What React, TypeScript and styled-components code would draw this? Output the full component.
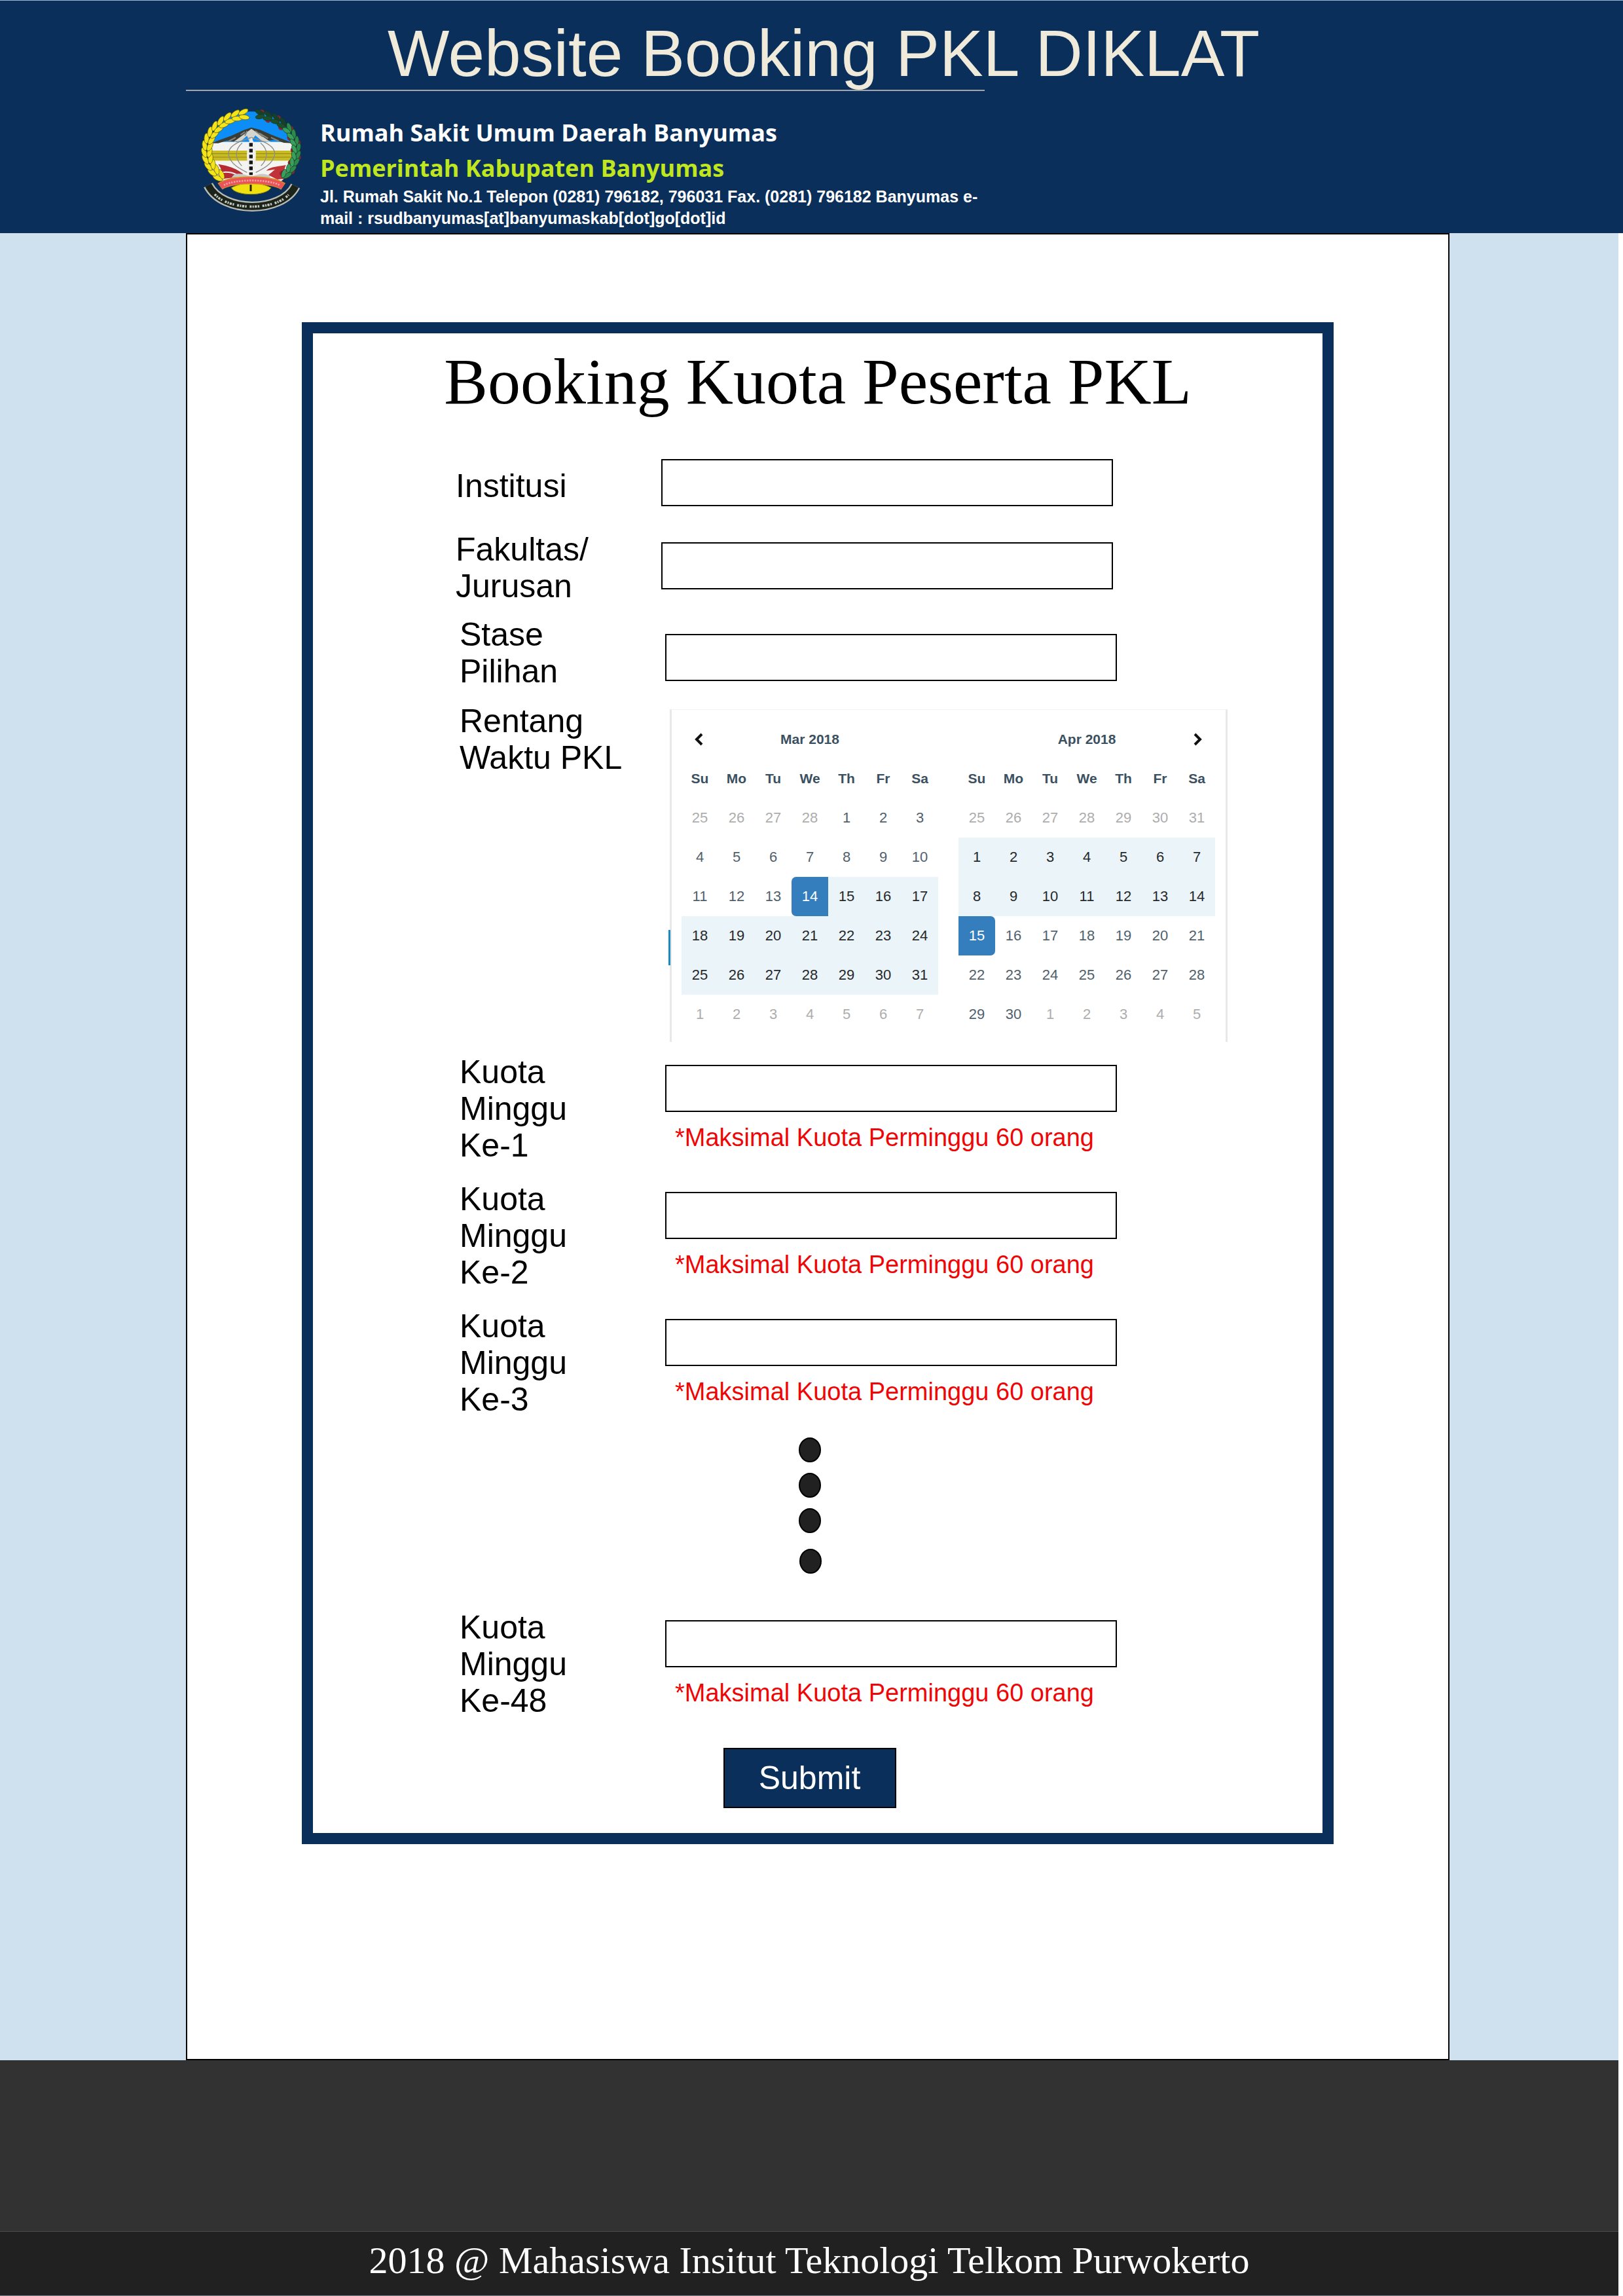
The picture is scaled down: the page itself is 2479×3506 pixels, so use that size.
import React from "react";
import styled, { createGlobalStyle, css } from "styled-components";

const sans = `"Liberation Sans", Arial, Helvetica, sans-serif`;
const serif = `"Liberation Serif", "Times New Roman", serif`;
const humanist = `"Open Sans", "Noto Sans", sans-serif`;

const color = {
  navy: "#0a2f5a",
  sky: "#cfe0ee",
  cream: "#f0eadb",
  lime: "#bfe61e",
  red: "#f00505",
  pick: "#357ebd",
  range: "#ebf4f8",
};

const GlobalStyle = createGlobalStyle`
  *, *::before, *::after { box-sizing: border-box; }
  body { margin: 0; background: #fff; font-family: ${sans}; color: #000; }
`;

/* ---------- header ---------- */

const Header = styled.header`
  display: grid;
  grid-template-columns: 284fr 1930fr 265fr;
  padding: 24px 0 6px;
  border-top: 1px solid #9dbad3;
  background: ${color.navy};
`;

const HeaderInner = styled.div`
  grid-column: 2;
`;

const SiteTitle = styled.h1`
  margin: 0;
  padding-left: 18px;
  font-size: 100px;
  line-height: 112px;
  font-weight: 400;
  text-align: center;
  color: ${color.cream};
`;

const Rule = styled.hr`
  width: 1220px;
  max-width: 100%;
  height: 2px;
  margin: 0;
  border: 0;
  background: #a3a5a8;
`;

const Brand = styled.div`
  display: flex;
  align-items: flex-start;
  gap: 24px;
  padding-left: 21px;
`;

const Emblem = styled.svg`
  flex: none;
  width: 160px;
  height: 160px;
  margin-top: 26px;
`;

const BrandText = styled.div`
  padding-top: 37px;
  font-weight: 700;
  color: #fff;
`;

const BrandName = styled.p<{ $accent?: boolean }>`
  margin: 0;
  font-family: ${humanist};
  font-size: 36px;
  line-height: 54px;
  color: ${(p) => (p.$accent ? color.lime : "#fff")};
`;

const Address = styled.address`
  font-size: 25px;
  line-height: 33px;
  font-style: normal;
`;

/* ---------- body ---------- */

const Page = styled.div`
  padding-right: 7px;
`;

const Body = styled.div`
  display: grid;
  grid-template-columns: 284fr 1930fr 258fr;
  background: ${color.sky};
`;

const Sheet = styled.main`
  grid-column: 2;
  padding: 134px 175px 328px;
  border: 2px solid #000;
  background: #fff;
`;

const Card = styled.section`
  padding: 18px 0 38px;
  border: 17px solid ${color.navy};
`;

const CardTitle = styled.h2`
  margin: 0 0 62px;
  font-family: ${serif};
  font-size: 100px;
  line-height: 112px;
  font-weight: 400;
  text-align: center;
`;

const Form = styled.form`
  padding: 0 145px 0 218px;
`;

const Group = styled.div<{ $indent?: number; $gap: number }>`
  display: flex;
  flex-direction: column;
  gap: ${(p) => p.$gap}px;
  padding-left: ${(p) => p.$indent ?? 0}px;
`;

const Stack = styled.div`
  display: flex;
  flex-direction: column;
  gap: 18px;
`;

const Row = styled.div`
  display: grid;
  grid-template-columns: 314px minmax(0, 1fr);
  align-items: start;
`;

const Label = styled.label<{ $inset?: number }>`
  padding-top: ${(p) => p.$inset ?? 0}px;
  font-size: 50px;
  line-height: 56px;
  white-space: pre-line;
`;

const Control = styled.div<{ $inset?: number }>`
  padding-top: ${(p) => p.$inset ?? 0}px;
`;

const TextBox = styled.input`
  display: block;
  width: 690px;
  max-width: 100%;
  height: 72px;
  padding: 0 16px;
  border: 2px solid #000;
  border-radius: 0;
  background: #fff;
  font: 40px ${sans};
`;

const Hint = styled.p`
  margin: 17px 0 0;
  padding-left: 15px;
  font-size: 38px;
  line-height: 44px;
  color: ${color.red};
`;

const Centered = styled.div`
  display: flex;
  justify-content: center;
  padding-right: 98px;
`;

const Dots = styled.svg`
  width: 36px;
  height: 210px;
  margin: 29px 0 53px;
`;

const Submit = styled.button`
  width: 264px;
  height: 92px;
  margin-top: 44px;
  padding: 0;
  border: 2px solid #000;
  border-radius: 0;
  background: ${color.navy};
  color: #fff;
  font: 50px ${sans};
`;

/* ---------- calendar ---------- */

const Calendar = styled.div`
  position: relative;
  display: flex;
  justify-content: space-between;
  margin-left: 7px;
  padding: 15px 16px 12px 15px;
  border: 3px solid #e8e8ea;
  border-width: 1px 3px 0;
  border-top-color: #f3f3f3;

  &::before {
    content: "";
    position: absolute;
    left: -5px;
    top: 336px;
    width: 3px;
    height: 54px;
    background: #1b8bbf;
  }
`;

const MonthBox = styled.div`
  width: 392px;
`;

const MonthHead = styled.div`
  display: grid;
  grid-template-columns: 52px 1fr 52px;
  align-items: center;
  height: 60px;
`;

const MonthName = styled.div`
  grid-column: 2;
  font-size: 21px;
  font-weight: 700;
  text-align: center;
  color: #3b5060;
`;

const NavButton = styled.button`
  display: flex;
  align-items: center;
  justify-content: center;
  height: 60px;
  padding: 0;
  border: 0;
  background: none;
`;

const Days = styled.table`
  width: 100%;
  table-layout: fixed;
  border-collapse: collapse;
`;

const WeekDay = styled.th`
  height: 60px;
  padding: 0;
  font-size: 21px;
  color: #3b5060;
`;

const DayCell = styled.td`
  height: 60px;
  padding: 0;
`;

type DayKind = "off" | "plain" | "range" | "start" | "end";

const dayLook = {
  off: css`
    color: #adadad;
  `,
  plain: css`
    color: #50616c;
  `,
  range: css`
    color: #26292c;
    background: ${color.range};
  `,
  start: css`
    color: #fff;
    background: ${color.pick};
    border-radius: 7px 0 0 7px;
  `,
  end: css`
    color: #fff;
    background: ${color.pick};
    border-radius: 0 7px 7px 0;
  `,
};

const Day = styled.button<{ $kind: DayKind }>`
  display: block;
  width: 100%;
  height: 60px;
  padding: 0;
  border: 0;
  background: none;
  font: 22px ${sans};
  ${(p) => dayLook[p.$kind]}
`;

/* ---------- footer ---------- */

const Footer = styled.footer`
  padding-top: 261px;
  background: #323232;
`;

const FooterBar = styled.div`
  padding: 12px 20px 21px;
  border-top: 1px solid #4b4b4b;
  border-bottom: 1px solid #7c8489;
  background: #212121;
  font-family: ${serif};
  font-size: 58px;
  line-height: 64px;
  text-align: center;
  color: #fff;
`;

/* ---------- emblem ---------- */

function wreath(from: number, to: number, count: number) {
  return Array.from({ length: count }, (_, i) => {
    const deg = from + ((to - from) * i) / (count - 1);
    const a = (deg * Math.PI) / 180;
    return {
      x: Math.round(283 + 205 * Math.cos(a)),
      y: Math.round(240 + 168 * Math.sin(a)),
      turn: Math.round(deg),
    };
  });
}

function Crest() {
  const left = wreath(136, 260, 13);
  const right = wreath(-80, 40, 12);
  return (
    <Emblem viewBox="45 45 480 480" role="img" aria-label="Lambang Kabupaten Banyumas">
      <defs>
        <clipPath id="scene">
          <ellipse cx="283" cy="245" rx="200" ry="184" />
        </clipPath>
      </defs>
      <g clipPath="url(#scene)">
        <rect x="80" y="50" width="410" height="160" fill="#0d8df6" />
        <rect x="80" y="200" width="410" height="180" fill="#f3f3f1" />
        <path d="M95 206 L190 172 L250 145 L282 134 L320 144 L385 172 L475 206 L430 204 L390 190 L350 196 L282 160 L215 200 L170 194 L130 206Z" fill="#3b3d35" />
        <path d="M282 140 L200 200 L235 196 L262 172 L275 205 L300 170 L330 196 L372 202Z" fill="#d5d5d0" />
        <path d="M232 168 l20 -14 M300 150 l34 26 M262 150 l-10 22 M318 160 l40 24 M210 180 l-34 18 M372 180 l36 16" stroke="#84857c" strokeWidth="6" />
        <rect x="80" y="240" width="410" height="46" fill="#c9bb22" />
        <path d="M80 254 H490 M80 270 H490" stroke="#8f861c" strokeWidth="3" />
        <path d="M282 180 C210 200 170 225 178 262 C188 300 222 320 262 340 M282 180 C355 200 396 225 388 262 C378 300 342 320 302 340 M240 205 C205 235 205 275 238 310 M324 205 C360 235 360 275 326 310" fill="none" stroke="#8d8e88" strokeWidth="4" />
        <path d="M282 180 C256 225 256 270 274 352 H290 C308 270 308 225 282 180Z" fill="#efefec" />
        <path d="M280 205 V352" stroke="#15171a" strokeWidth="16" strokeDasharray="16 11" />
        <path d="M130 302 C170 308 210 320 244 346 L210 362 L128 372 C150 350 150 330 130 302Z" fill="#b52a33" />
        <path d="M440 306 C410 312 370 312 350 332 L390 326 L360 352 L400 372 L450 368 L426 344Z" fill="#c03138" />
        <path d="M132 344 C160 334 196 338 216 352" fill="none" stroke="#eee" strokeWidth="6" />
        <path d="M192 362 C205 340 235 342 282 360 C325 340 356 342 372 364Z" fill="#c9cbc2" />
      </g>
      <path d="M190 410 C240 382 322 382 372 410 C350 450 210 450 190 410Z" fill="#efe010" stroke="#817a10" strokeWidth="3" />
      <path d="M279 396 V426" stroke="#26260c" strokeWidth="9" />
      <path d="M138 404 C190 366 372 366 428 404" fill="none" stroke="#d98a24" strokeWidth="36" />
      <path d="M140 404 C192 367 370 367 426 404" fill="none" stroke="#e9545a" strokeWidth="27" />
      <path d="M156 398 C206 370 360 370 412 398" fill="none" stroke="#f4a1a0" strokeWidth="8" strokeDasharray="7 5" />

      {left.map((p, i) => (
        <g key={i} transform={`translate(${p.x} ${p.y}) rotate(${p.turn})`} fill="#f3e41a" stroke="#5d560c" strokeWidth="2">
          <ellipse cx="12" cy="0" rx="11" ry="24" transform="rotate(-18 12 0)" />
          <ellipse cx="-12" cy="0" rx="11" ry="24" transform="rotate(18 -12 0)" />
        </g>
      ))}
      {right.map((p, i) => (
        <g key={i} transform={`translate(${p.x} ${p.y}) rotate(${p.turn})`} stroke="#123a22" strokeWidth="2">
          <circle cx={i % 2 ? -15 : 12} cy="8" r="12" fill="#8f2430" stroke="none" />
          <ellipse cx="9" cy="0" rx="10" ry="23" transform="rotate(18 9 0)" fill={i < 4 ? "#17402a" : "#2d8a4d"} />
          <ellipse cx="-9" cy="4" rx="10" ry="21" transform="rotate(-20 -9 4)" fill={i < 4 ? "#1e4d2c" : "#3a9f5c"} />
        </g>
      ))}

      <path d="M84 398 C150 528 420 528 484 402" fill="none" stroke="#b9bcb2" strokeWidth="46" />
      <path d="M84 398 C150 528 420 528 484 402" fill="none" stroke="#1b231b" strokeWidth="32" />
      <path d="M114 440 C180 516 390 514 452 442" fill="none" stroke="#c4c7bf" strokeWidth="11" strokeDasharray="9 4 6 4 10 4 7 14" />
    </Emblem>
  );
}

/* ---------- data ---------- */

const weekDays = ["Su", "Mo", "Tu", "We", "Th", "Fr", "Sa"];

interface MonthData {
  name: string;
  before: number[];
  length: number;
  after: number;
  kind: (day: number) => DayKind;
}

const march: MonthData = {
  name: "Mar 2018",
  before: [25, 26, 27, 28],
  length: 31,
  after: 7,
  kind: (d) => (d === 14 ? "start" : d > 14 ? "range" : "plain"),
};

const april: MonthData = {
  name: "Apr 2018",
  before: [25, 26, 27, 28, 29, 30, 31],
  length: 30,
  after: 5,
  kind: (d) => (d === 15 ? "end" : d < 15 ? "range" : "plain"),
};

function weeksOf(month: MonthData) {
  const cells: { day: number; kind: DayKind }[] = [
    ...month.before.map((day) => ({ day, kind: "off" as DayKind })),
    ...Array.from({ length: month.length }, (_, i) => ({ day: i + 1, kind: month.kind(i + 1) })),
    ...Array.from({ length: month.after }, (_, i) => ({ day: i + 1, kind: "off" as DayKind })),
  ];
  return Array.from({ length: cells.length / 7 }, (_, w) => cells.slice(w * 7, w * 7 + 7));
}

function Month({ data, prev, next }: { data: MonthData; prev?: boolean; next?: boolean }) {
  return (
    <MonthBox>
      <MonthHead>
        {prev ? (
          <NavButton type="button" aria-label="Bulan sebelumnya">
            <svg width="14" height="20" viewBox="0 0 14 20" fill="none" stroke="#111" strokeWidth="4">
              <path d="M12 2 L4 10 L12 18" />
            </svg>
          </NavButton>
        ) : null}
        <MonthName>{data.name}</MonthName>
        {next ? (
          <NavButton type="button" aria-label="Bulan berikutnya">
            <svg width="14" height="20" viewBox="0 0 14 20" fill="none" stroke="#111" strokeWidth="4">
              <path d="M2 2 L10 10 L2 18" />
            </svg>
          </NavButton>
        ) : null}
      </MonthHead>
      <Days aria-label={data.name}>
        <thead>
          <tr>
            {weekDays.map((d) => (
              <WeekDay key={d} scope="col">
                {d}
              </WeekDay>
            ))}
          </tr>
        </thead>
        <tbody>
          {weeksOf(data).map((week, w) => (
            <tr key={w}>
              {week.map((cell, i) => (
                <DayCell key={i}>
                  <Day type="button" $kind={cell.kind}>
                    {cell.day}
                  </Day>
                </DayCell>
              ))}
            </tr>
          ))}
        </tbody>
      </Days>
    </MonthBox>
  );
}

function QuotaRow({ week }: { week: number }) {
  const id = `kuota-${week}`;
  return (
    <Row>
      <Label htmlFor={id}>{`Kuota\nMinggu\nKe-${week}`}</Label>
      <Control $inset={17}>
        <TextBox id={id} type="text" inputMode="numeric" aria-describedby={`${id}-hint`} />
        <Hint id={`${id}-hint`}>*Maksimal Kuota Perminggu 60 orang</Hint>
      </Control>
    </Row>
  );
}

export default function App() {
  return (
    <>
      <GlobalStyle />
      <Header>
        <HeaderInner>
          <SiteTitle>Website Booking PKL DIKLAT</SiteTitle>
          <Rule />
          <Brand>
            <Crest />
            <BrandText>
              <BrandName>Rumah Sakit Umum Daerah Banyumas</BrandName>
              <BrandName $accent>Pemerintah Kabupaten Banyumas</BrandName>
              <Address>
                Jl. Rumah Sakit No.1 Telepon (0281) 796182, 796031 Fax. (0281) 796182 Banyumas e-
                <br />
                mail : rsudbanyumas[at]banyumaskab[dot]go[dot]id
              </Address>
            </BrandText>
          </Brand>
        </HeaderInner>
      </Header>

      <Page>
        <Body>
          <Sheet>
            <Card>
              <CardTitle>Booking Kuota Peserta PKL</CardTitle>
              <Form onSubmit={(e) => e.preventDefault()}>
                <Stack>
                  <Group $gap={38}>
                    <Row>
                      <Label htmlFor="institusi" $inset={13}>
                        Institusi
                      </Label>
                      <Control>
                        <TextBox id="institusi" type="text" />
                      </Control>
                    </Row>
                    <Row>
                      <Label htmlFor="fakultas">{"Fakultas/\nJurusan"}</Label>
                      <Control $inset={17}>
                        <TextBox id="fakultas" type="text" />
                      </Control>
                    </Row>
                  </Group>
                  <Group $gap={20} $indent={6}>
                    <Row>
                      <Label htmlFor="stase">{"Stase\nPilihan"}</Label>
                      <Control $inset={27}>
                        <TextBox id="stase" type="text" />
                      </Control>
                    </Row>
                    <Row>
                      <Label as="div" id="rentang">
                        {"Rentang\nWaktu PKL"}
                      </Label>
                      <Control $inset={10}>
                        <Calendar role="group" aria-labelledby="rentang">
                          <Month data={march} prev />
                          <Month data={april} next />
                        </Calendar>
                      </Control>
                    </Row>
                  </Group>
                  <Group $gap={26} $indent={6}>
                    <QuotaRow week={1} />
                    <QuotaRow week={2} />
                    <QuotaRow week={3} />
                  </Group>
                </Stack>
                <Centered>
                  <Dots viewBox="0 0 36 210" aria-hidden="true" fill="#212121" stroke="#000" strokeWidth="2">
                    <ellipse cx="18" cy="20" rx="16" ry="18" />
                    <ellipse cx="18" cy="74" rx="16" ry="18" />
                    <ellipse cx="18" cy="128" rx="16" ry="18" />
                    <ellipse cx="19" cy="190" rx="16" ry="18" />
                  </Dots>
                </Centered>
                <Group $gap={26} $indent={6}>
                  <QuotaRow week={48} />
                </Group>
                <Centered>
                  <Submit type="submit">Submit</Submit>
                </Centered>
              </Form>
            </Card>
          </Sheet>
        </Body>
        <Footer>
          <FooterBar>2018 @ Mahasiswa Insitut Teknologi Telkom Purwokerto</FooterBar>
        </Footer>
      </Page>
    </>
  );
}
